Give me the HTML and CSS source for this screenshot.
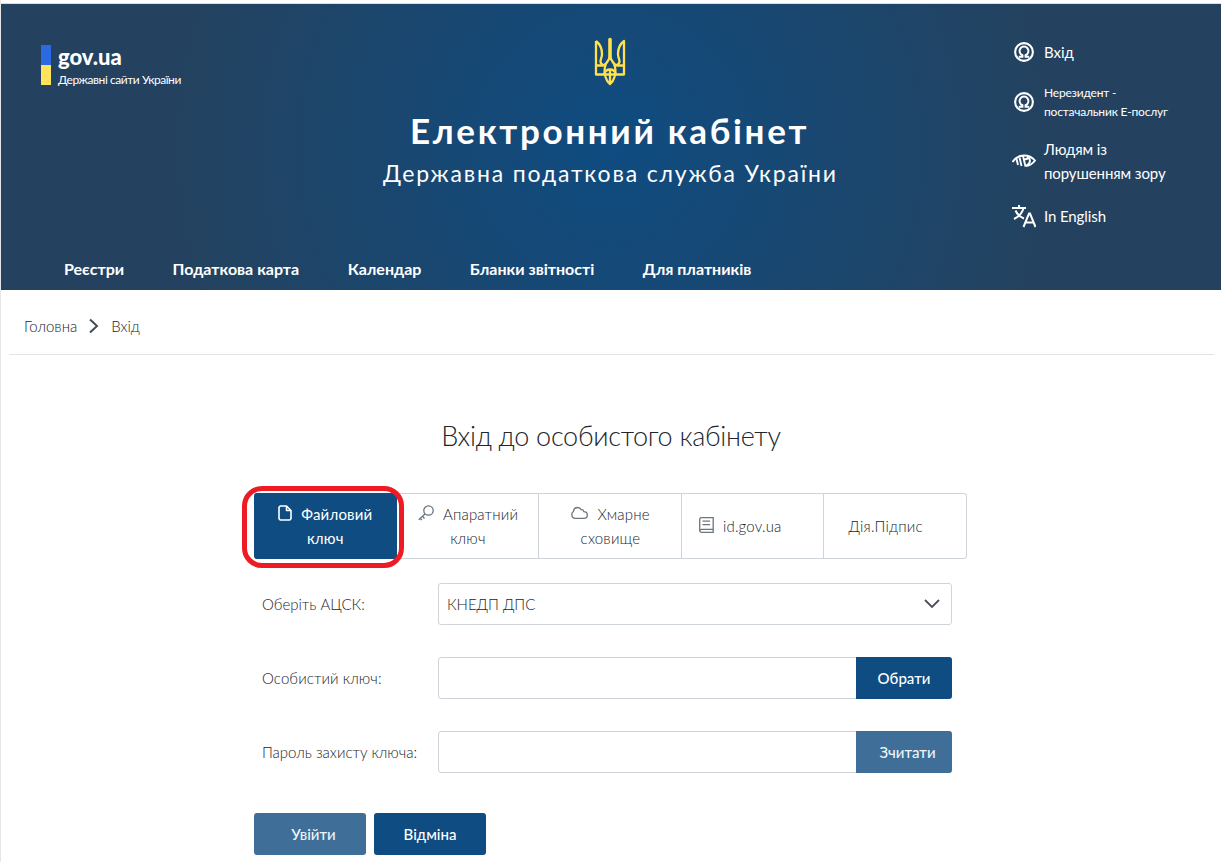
FILE: index.html
```html
<!DOCTYPE html>
<html lang="uk">
<head>
<meta charset="UTF-8">
<meta name="viewport" content="width=device-width, initial-scale=1.0">
<title>Електронний кабінет</title>
<link rel="stylesheet" href="styles.css">
</head>
<body>

<svg class="sprite" width="0" height="0">
  <symbol id="user" viewBox="0 0 18 18">
    <circle cx="9" cy="9" r="8" fill="none" stroke="currentColor" stroke-width="1.9"/>
    <path d="M4.300 13.200H7.600V11.800A4 4 0 1 1 10.400 11.800V13.200H13.700" fill="none" stroke="currentColor" stroke-width="1.800"/>
  </symbol>
</svg>

<header class="header">
  <div class="header-top">
    <a class="gov">
      <span class="flag"></span>
      <span class="gov-text">
        <b>gov.ua</b>
        <small>Державні сайти України</small>
      </span>
    </a>

    <div class="brand">
      <svg class="trident" width="32" height="50" viewBox="0 0 32 50" fill="none" stroke="#ffe14d" stroke-width="2.300" stroke-linejoin="round">
        <path d="M2 4V37.500H30V4C26 7 24 12 24 17C24 20 25.500 22 25.500 24.500C25.500 26.500 24 27.500 22.500 28M2 4C6 7 8 12 8 17C8 20 6.500 22 6.500 24.500C6.500 26.500 8 27.500 9.500 28"/>
        <path d="M2 28.500H9C12 28 13.500 25 16 20C18.500 25 20 28 23 28.500H30"/>
        <path d="M12 27C10.500 30 10.500 36 11.500 40C12.500 43.500 14 45.500 16 47C18 45.500 19.500 43.500 20.500 40C21.500 36 21.500 30 20 27"/>
        <path d="M16 32V46M10 37.500C11 34 13 32.500 16 32.500C19 32.500 21 34 22 37.500"/>
        <path d="M16 2.500V21" stroke-width="3.600" stroke-linecap="round"/>
      </svg>
      <h1>Електронний кабінет</h1>
      <p>Державна податкова служба України</p>
    </div>

    <ul class="links">
      <li class="link-login">
        <svg width="20" height="20"><use href="#user"/></svg>
        <span>Вхід</span>
      </li>
      <li class="link-small">
        <svg width="20" height="20"><use href="#user"/></svg>
        <span>Нерезидент -<br>постачальник Е-послуг</span>
      </li>
      <li class="link-vision">
        <svg width="24" height="16" viewBox="0 0 24 16" fill="none" stroke="currentColor" stroke-width="1.900">
          <path d="M.5 9C4 4 8 2.500 12 2.500S20 4 23 7.500C20.500 11 17.500 12.800 13.500 13"/>
          <path d="M4.500 6L6 12M7.500 4.500L9.500 13M11 3L13.500 13.500M15 3.500C19 6 19 10 14.500 12.500M11.500 5.500C13 6.500 14.500 6.500 16 5"/>
        </svg>
        <span>Людям із<br>порушенням зору</span>
      </li>
      <li class="link-lang">
        <svg width="24" height="24" viewBox="0 0 24 24" fill="none" stroke="currentColor" stroke-width="2">
          <path d="M0 4H14M7 1V4M11.500 4C10.500 8.500 7 12.500 2 15M3.500 6.500C5 10 8 13 12 14.500"/>
          <path d="M11.500 23L17 9.500H18L23.500 23M13.500 18.500H21.500"/>
        </svg>
        <span>In English</span>
      </li>
    </ul>
  </div>

  <nav class="menu">
    <a>Реєстри</a>
    <a>Податкова карта</a>
    <a>Календар</a>
    <a>Бланки звітності</a>
    <a>Для платників</a>
  </nav>
</header>

<main class="page">
  <div class="breadcrumbs">
    <a>Головна</a>
    <svg width="10" height="16" viewBox="0 0 10 16" fill="none" stroke="#444c55" stroke-width="2"><path d="M1 1.500L8 8L1 14.500"/></svg>
    <span>Вхід</span>
  </div>

  <h2>Вхід до особистого кабінету</h2>

  <form class="login">
    <div class="tabs">
      <div class="tab active">
        <div>
          <svg width="14" height="16" viewBox="0 0 14 16" fill="none" stroke="currentColor" stroke-width="1.600" stroke-linejoin="round"><path d="M2.200 1H8.500L13 5.500V13.800L11.800 15H2.200L1 13.800V2.200ZM8.500 1V5.500H13"/></svg>
          <span>Файловий</span><br><span>ключ</span>
        </div>
        <span class="mark"></span>
      </div>
      <div class="tab">
        <div>
          <svg width="16" height="16" viewBox="0 0 16 16" fill="none" stroke="#6c757d" stroke-width="1.300"><circle cx="10.500" cy="5.500" r="4.700"/><path d="M7 9L.7 14.700M4.500 11.300L6.500 13.500M2.300 13.300L3.800 15.200"/></svg>
          <span>Апаратний</span><br><span>ключ</span>
        </div>
      </div>
      <div class="tab cloud">
        <div>
          <svg width="17" height="16" viewBox="0 0 17 16" fill="none" stroke="#6c757d" stroke-width="1.300"><path d="M4 13.300C2 13 .8 11.500.8 9.500C.8 8 1.500 7 2.500 6.300C2.800 4 4.500 2.500 6.500 2.500C8.300 2.500 9.500 3.300 10.200 4.700C11.500 4.500 12.500 5.500 12.800 6.600C15 6.700 16.300 8 16.300 9.900C16.300 12 15 13.300 13 13.300Z"/></svg>
          <span>Хмарне</span><br><span>сховище</span>
        </div>
      </div>
      <div class="tab idgov">
        <div>
          <svg width="15" height="16" viewBox="0 0 15 16" fill="none" stroke="#6c757d" stroke-width="1.300"><path d="M14.200 12.300V.700H2.500Q.7.700.7 2.500V13.500Q.7 15.300 2.500 15.300H14.200V12.300H2.500Q.7 12.300.7 14M3.500 4.200H11M3.500 7.700H11"/></svg>
          <span>id.gov.ua</span>
        </div>
      </div>
      <div class="tab diia">
        <div><span>Дія.Підпис</span></div>
      </div>
    </div>

    <div class="row">
      <label>Оберіть АЦСК:</label>
      <div class="field select">
        <span>КНЕДП ДПС</span>
        <svg width="16" height="10" viewBox="0 0 16 10" fill="none" stroke="#495057" stroke-width="1.800"><path d="M1 1L8 8L15 1"/></svg>
      </div>
    </div>
    <div class="row">
      <label class="wide">Особистий ключ:</label>
      <div class="field group"><button type="button" class="btn">Обрати</button></div>
    </div>
    <div class="row">
      <label>Пароль захисту ключа:</label>
      <div class="field group"><button type="button" class="btn off">Зчитати</button></div>
    </div>

    <div class="actions">
      <button type="button" class="btn off">Увійти</button>
      <button type="button" class="btn">Відміна</button>
    </div>
  </form>
</main>

</body>
</html>
```
FILE: styles.css
```css
* {
  box-sizing: border-box;
}

body {
  margin: 0;
  padding: 3px 1px 0 0;
  height: 862px;
  overflow: hidden;
  border-left: 1px solid #e6e6e6;
  background: #fff;
  color: #20262c;
  font-family: Lato, "Noto Sans", sans-serif;
  font-size: 15px;
  font-weight: 300;
  line-height: 24px;
}

.sprite {
  display: none;
}

/* Header */
.header {
  display: flex;
  flex-direction: column;
  height: 287px;
  border-top: 1px solid #ddd;
  color: #fff;
  font-weight: 400;
  background: radial-gradient(circle at 50% 50%, #0f4c81 0, #24425f 440px);
}

.header-top {
  display: grid;
  grid-template-columns: 340px 1fr 340px;
  height: 240px;
}

.gov {
  display: flex;
  gap: 7px;
  padding: 41px 0 0 40px;
}

.flag {
  width: 10px;
  height: 40px;
  background: linear-gradient(#2a6be4 50%, #ffe35a 50%);
}

.gov-text {
  display: flex;
  flex-direction: column;
}

.gov-text b {
  font-size: 22px;
  font-weight: 900;
  line-height: 24px;
}

.gov-text small {
  margin-top: 3px;
  font-size: 12px;
  line-height: 16px;
  letter-spacing: -.45px;
  white-space: nowrap;
}

.brand {
  display: flex;
  flex-direction: column;
  align-items: center;
  padding-top: 33px;
  white-space: nowrap;
}

.trident {
  margin-right: 2px;
}

.brand h1 {
  margin: 19px 3px 0 0;
  font-size: 35px;
  font-weight: 700;
  line-height: 48px;
  letter-spacing: 2.65px;
}

.brand p {
  margin: 5px 1px 0 0;
  font-size: 23px;
  line-height: 28px;
  letter-spacing: 1.82px;
}

.links {
  margin: 0;
  padding: 37px 0 0 131px;
  list-style: none;
}

.links li {
  display: flex;
  align-items: center;
  gap: 8px;
}

.links svg {
  flex: none;
  width: 24px;
}

.link-login {
  margin-top: -1px;
}

.links .link-small {
  margin-top: 19px;
  font-size: 12px;
  line-height: 19px;
  letter-spacing: -.2px;
}

.link-vision {
  margin-top: 16px;
  letter-spacing: -.1px;
}

.link-lang {
  margin-top: 19px;
  letter-spacing: -.1px;
}

.menu {
  display: flex;
  gap: 48.5px;
  padding: 13px 0 0 63px;
  font-size: 16px;
  font-weight: 700;
  white-space: nowrap;
}

/* Breadcrumbs */
.breadcrumbs {
  display: flex;
  align-items: center;
  gap: 12px;
  height: 65px;
  margin: 0 7px 0 8px;
  padding: 8px 0 0 15px;
  border-bottom: 1px solid #e4e4e4;
}

h2 {
  margin: 64px 0 0;
  font-size: 27px;
  font-weight: 300;
  line-height: 34px;
  letter-spacing: -.28px;
  text-align: center;
}

/* Login form */
.login {
  width: 713px;
  margin: 40px 0 0 253px;
}

.tabs {
  display: grid;
  grid-template-columns: repeat(5, 1fr);
  height: 66px;
}

.tab {
  position: relative;
  display: flex;
  align-items: center;
  justify-content: center;
  padding-left: 1px;
  border: 1px solid #ced4da;
  border-left-width: 0;
  text-align: center;
  letter-spacing: .2px;
}

.tab svg {
  margin-right: 5px;
  vertical-align: -1px;
}

.tab:last-child {
  border-radius: 0 3px 3px 0;
}

.tab.active {
  border-color: #0f4c81;
  border-radius: 3px 0 0 3px;
  background: #0f4c81;
  color: #fff;
  font-weight: 400;
}

.tab.idgov {
  padding-right: 26px;
}

.tab.diia {
  padding-right: 20px;
}

.mark {
  position: absolute;
  inset: -8px -8px -10px -12px;
  z-index: 1;
  border: 5px solid #ed1c24;
  border-radius: 20px;
}

.row {
  display: flex;
  align-items: center;
  height: 42px;
  margin: 24px 0 32px;
  padding-left: 8px;
}

.row + .row {
  margin-top: 0;
}

.row label {
  width: 176px;
  white-space: nowrap;
}

.row label.wide {
  letter-spacing: .1px;
}

.field {
  display: flex;
  align-items: center;
  width: 514px;
  height: 42px;
  border: 1px solid #ced4da;
  border-radius: 3px;
}

.select {
  justify-content: space-between;
  padding: 0 11px 0 8px;
}

.group {
  justify-content: flex-end;
}

.btn {
  width: 112px;
  height: 42px;
  padding: 0;
  border: 0;
  border-radius: 3px;
  background: #0f4c81;
  color: #fff;
  font: inherit;
  font-weight: 500;
}

.group .btn {
  width: 96px;
  margin-right: -1px;
  border-radius: 0 3px 3px 0;
}

.btn.off {
  padding-left: 7px;
  background: #3f6f99;
  color: #eef3f7;
}

.actions {
  display: flex;
  gap: 8px;
  margin-top: 40px;
}
```
